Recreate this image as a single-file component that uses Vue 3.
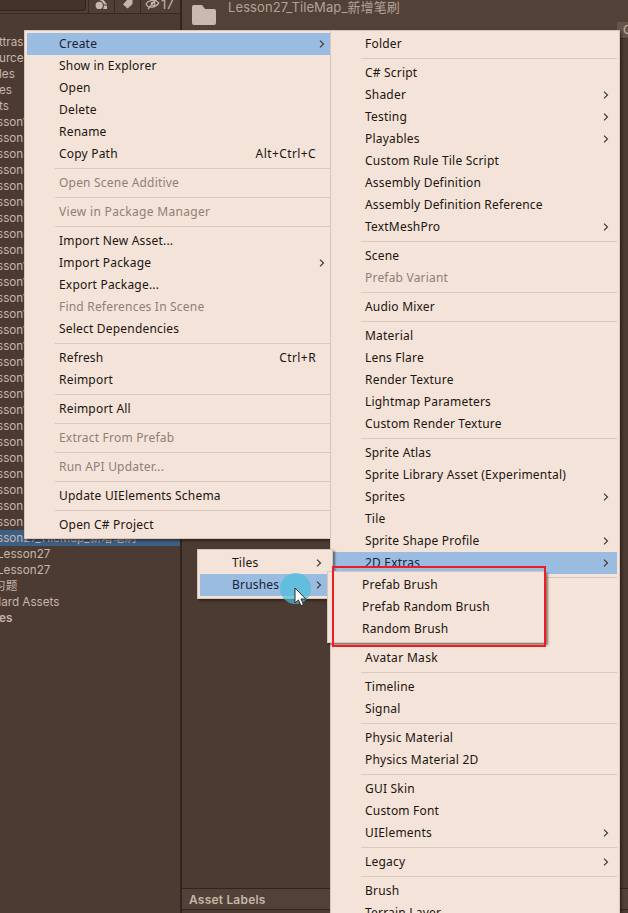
<script setup>
const main = [
  { t: 'Create', arrow: true, on: true }, { t: 'Show in Explorer' }, { t: 'Open' }, { t: 'Delete' }, { t: 'Rename' },
  { t: 'Copy Path', key: 'Alt+Ctrl+C' }, '-', { t: 'Open Scene Additive', off: true }, '-',
  { t: 'View in Package Manager', off: true, wide: true }, '-', { t: 'Import New Asset...' }, { t: 'Import Package', arrow: true },
  { t: 'Export Package...' }, { t: 'Find References In Scene', off: true }, { t: 'Select Dependencies' }, '-',
  { t: 'Refresh', key: 'Ctrl+R' }, { t: 'Reimport' }, '-', { t: 'Reimport All' }, '-',
  { t: 'Extract From Prefab', off: true }, '-', { t: 'Run API Updater...', off: true }, '-',
  { t: 'Update UIElements Schema' }, '-', { t: 'Open C# Project' },
]
const create = [
  { t: 'Folder' }, '-', { t: 'C# Script' }, { t: 'Shader', arrow: true }, { t: 'Testing', arrow: true },
  { t: 'Playables', arrow: true }, { t: 'Custom Rule Tile Script' }, { t: 'Assembly Definition' },
  { t: 'Assembly Definition Reference' }, { t: 'TextMeshPro', arrow: true }, '-', { t: 'Scene' },
  { t: 'Prefab Variant', off: true }, '-', { t: 'Audio Mixer' }, '-', { t: 'Material' }, { t: 'Lens Flare' },
  { t: 'Render Texture' }, { t: 'Lightmap Parameters' }, { t: 'Custom Render Texture' }, '-', { t: 'Sprite Atlas' },
  { t: 'Sprite Library Asset (Experimental)' }, { t: 'Sprites', arrow: true }, { t: 'Tile' },
  { t: 'Sprite Shape Profile', arrow: true }, { t: '2D Extras', arrow: true, on: true }, '-',
  { t: '' }, { t: '' }, { t: '' }, { t: 'Avatar Mask', wide: true }, '-', { t: 'Timeline' }, { t: 'Signal' }, '-',
  { t: 'Physic Material' }, { t: 'Physics Material 2D' }, '-', { t: 'GUI Skin' }, { t: 'Custom Font' },
  { t: 'UIElements', arrow: true }, '-', { t: 'Legacy', arrow: true }, '-', { t: 'Brush' }, { t: 'Terrain Layer' },
]
const extras = [{ t: 'Tiles', arrow: true }, { t: 'Brushes', arrow: true, on: true }]
const brushes = [{ t: 'Prefab Brush' }, { t: 'Prefab Random Brush' }, { t: 'Random Brush' }]
const menus = [
  { id: 'main', items: main }, { id: 'create', items: create },
  { id: 'extras', items: extras }, { id: 'brushes', items: brushes },
]
const tree = [
  { t: 'ttras-', c: 'a' }, { t: 'urces', c: 'a' }, { t: 'les', c: 'a' }, { t: 'es', c: 'a' }, { t: 'ts', c: 'a' },
  ...Array.from({ length: 26 }, (_, i) => ({ t: 'sson' + (i + 1), c: 'b' })),
  { t: 'sson27_TileMap_新增笔刷', c: 'b sel' }, { t: 'Lesson27', c: 'c' }, { t: 'Lesson27', c: 'c' },
  { t: '习题', c: 'd' }, { t: 'dard Assets', c: 'e' }, { t: 'es', c: 'a bold' },
]
</script>

<template>
  <div class="screen">
    <aside class="project">
      <div class="toolbar">
        <div class="search"></div>
        <div class="tool t1">
          <svg width="14" height="10" viewBox="0 0 14 10"><circle cx="4.2" cy="5.4" r="3.6" /><path d="M4.5 0h4l3.7 4.6H9.2L7 1.4zM9 5.4h3V9H8.2z" /></svg>
        </div>
        <div class="tool t2">
          <svg width="12" height="10" viewBox="0 0 12 10"><path d="M5 0h5.5v4L5.6 8.6 1 4.4z" /></svg>
        </div>
        <div class="tool t3">
          <svg width="16" height="10" viewBox="0 0 16 10" fill="none" class="eye"><path d="M1 4C3 0 10-1 14 3M1 4c2 4 8 5 13-1M3 9 12-1M6 4c1-3 4-2 4 0S7 6 6 4" /></svg>
          <span>17</span>
        </div>
      </div>
      <div class="tree">
        <div v-for="(r, i) in tree" :key="i" class="node" :class="r.c"><span>{{ r.t }}</span></div>
      </div>
    </aside>
    <main class="inspector">
      <header class="head">
        <svg width="24" height="20" viewBox="0 0 24 20"><path d="M2 0h8l3 4h9q2 0 2 2v12q0 2-2 2H2q-2 0-2-2V2Q0 0 2 0z" /></svg>
        <span>Lesson27_TileMap_新增笔刷</span>
      </header>
      <div class="open">O</div>
      <footer class="labels">Asset Labels</footer>
    </main>

    <div v-for="m in menus" :key="m.id" class="menu" :class="m.id">
      <template v-for="(it, i) in m.items" :key="i">
        <div v-if="it === '-'" class="sep"></div>
        <div v-else class="item" :class="{ on: it.on, off: it.off, wide: it.wide }">
          <span class="label">{{ it.t }}</span>
          <span v-if="it.key" class="key">{{ it.key }}</span>
          <svg v-if="it.arrow" class="arrow" width="6" height="8" viewBox="0 0 6 8"><path d="M1 .6 4.5 4 1 7.4" /></svg>
        </div>
      </template>
    </div>

    <div class="frame"></div>
    <div class="halo"></div>
    <svg class="cursor" width="13" height="20" viewBox="0 0 13 20"><path d="M1 1v15l3.4-3 2.5 5.6 2.6-1.1L7 12h4.8z" /></svg>
  </div>
</template>

<style>
body { background: #4c3b32; overflow: hidden; }
</style>

<style scoped>
.screen { position: relative; width: 628px; height: 913px; overflow: hidden; display: flex; background: #4c3b32; font-family: Inter, "Noto Sans CJK SC", sans-serif; font-size: 12px; color: #c5b5aa; }
.project { width: 180px; flex: none; border-right: 2px solid #33251e; }
.toolbar { height: 13px; display: flex; border-bottom: 1px solid #392a22; background: #503f36; }
.search { width: 85px; height: 10px; background: #44332a; border: 1px solid #32241d; border-top: 0; border-left: 0; border-radius: 0 0 4px 0; margin-right: 2px; }
.tool { border-left: 1px solid #392a22; height: 13px; display: flex; align-items: flex-start; fill: #c5b5aa; }
.t1 { width: 25px; justify-content: center; }
.t2 { width: 25px; justify-content: center; }
.t3 { flex: 1; padding-left: 4px; }
.t3 span { line-height: 14px; margin-top: -3px; font-size: 13px; }
.eye { stroke: #c5b5aa; stroke-width: 1.2; }
.tree { padding-top: 20px; font-size: 11.7px; }
.node { height: 16px; line-height: 16px; white-space: nowrap; }
.node span { display: block; }
.a span { margin-left: -1px; }
.b span { margin-left: -3px; }
.c span { margin-left: -3px; }
.d span { margin-left: -6px; }
.e span { margin-left: -6px; }
.sel { background: #3e5f85; }
.bold { font-weight: 600; }
.inspector { position: relative; flex: 1; display: flex; flex-direction: column; background: #4c3b32; }
.head { height: 38px; background: #524137; display: flex; align-items: flex-start; padding-left: 10px; fill: #c9b9af; border-bottom: 1px solid #3d2e26; }
.head svg { margin-top: 5px; flex: none; }
.head span { margin-left: 12px; margin-top: -1px; line-height: 16px; font-size: 13px; color: #b3a197; white-space: nowrap; letter-spacing: .1px; }
.open { position: absolute; left: 435px; top: 22px; width: 40px; height: 16px; line-height: 16px; padding-left: 6px; background: #66554b; }
.labels { margin-top: auto; height: 20px; line-height: 21px; padding-left: 7px; border-top: 1px solid #33251e; border-bottom: 1px solid #33251e; margin-bottom: 3px; font-weight: 600; background: #524137; letter-spacing: .2px; }

.menu { position: absolute; box-sizing: border-box; background: #f4e3d9; border: 1px solid #d8c6bb; padding: 2px; font: 12px/22px "Noto Sans", sans-serif; letter-spacing: .2px; color: #21150f; box-shadow: 2px 2px 2px rgba(25, 15, 8, .5); }
.main { left: 24px; top: 30px; width: 307px; height: 509px; padding-right: 0; }
.create { left: 330px; top: 30px; width: 290px; height: 900px; }
.extras { left: 197px; top: 549px; width: 136px; height: 50px; }
.brushes { left: 327px; top: 571px; width: 219px; height: 72px; }
.item { height: 22px; display: flex; align-items: center; padding-left: 32px; white-space: nowrap; }
.label { flex: 1; }
.wide .label { letter-spacing: .32px; }
.key { margin-right: 14px; letter-spacing: .4px; }
.arrow { margin-right: 8px; fill: none; stroke: #453730; stroke-width: 1.2; }
.main .arrow { margin-right: 5px; }
.on { background: #99bce0; color: #182338; }
.off { color: #8f8077; }
.sep { height: 1px; margin: 3px 0 3px 28px; background: #d9c8bd; }
.frame { position: absolute; box-sizing: border-box; left: 332px; top: 566px; width: 214px; height: 81px; border: 2px solid #ee1c25; }
.halo { position: absolute; left: 280px; top: 573px; width: 31px; height: 31px; border-radius: 50%; background: rgba(75, 190, 220, .7); }
.cursor { position: absolute; left: 294px; top: 587px; fill: #fff; stroke: #332a28; stroke-width: 1; }
</style>
